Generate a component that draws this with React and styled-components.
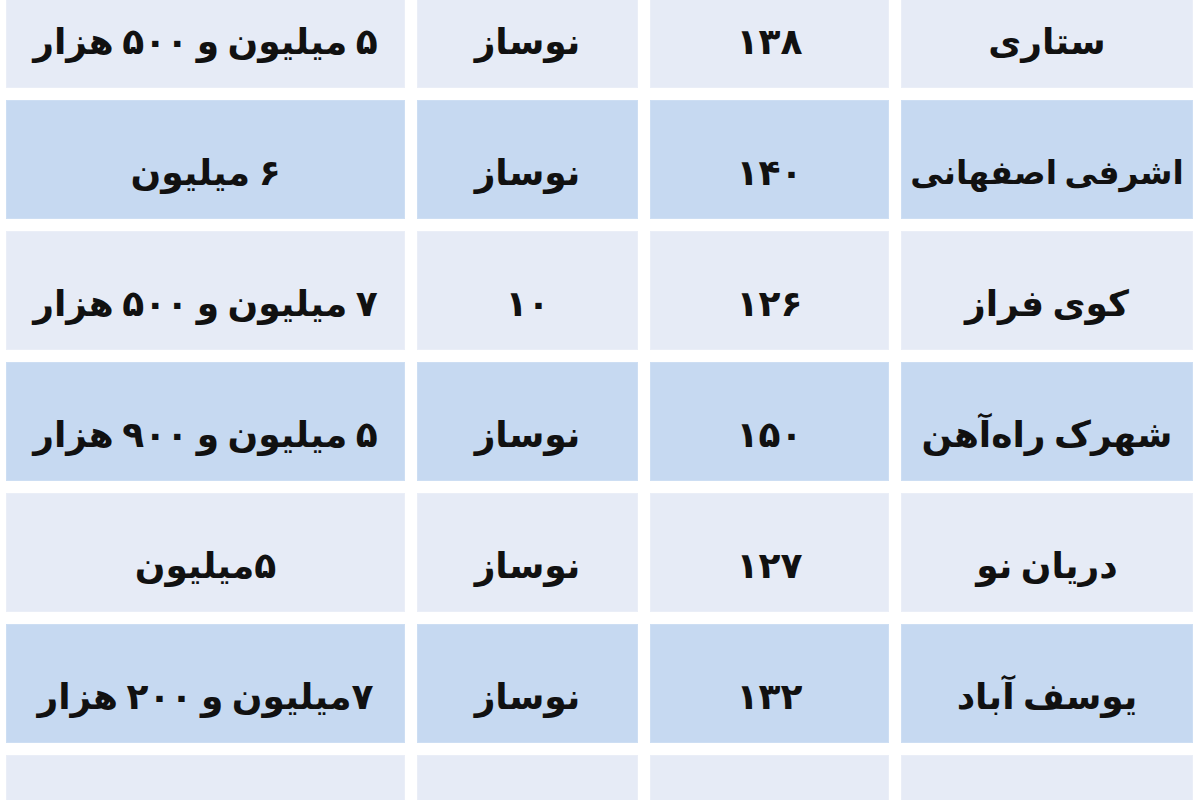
import React from "react";
import styled, { createGlobalStyle } from "styled-components";

const GlobalStyle = createGlobalStyle`
  html, body {
    margin: 0;
    padding: 0;
    background: #ffffff;
    overflow: hidden;
  }
  body {
    font-family: "DejaVu Sans", "Noto Sans", sans-serif;
  }
`;

const Page = styled.div`
  width: 1200px;
  height: 800px;
  overflow: hidden;
  background: #ffffff;
`;

const Table = styled.div`
  direction: rtl;
  display: grid;
  grid-template-columns: 292px 239px 221px 399px;
  grid-auto-rows: 119px;
  column-gap: 12px;
  row-gap: 12px;
  padding: 0 7px 0 6px;
  margin-top: -31px;
`;

const Cell = styled.div`
  display: flex;
  align-items: center;
  justify-content: center;
  padding-top: 26px;
  box-sizing: border-box;
  background: ${(p) => (p.$blue ? "#c6d9f1" : "#e6ebf6")};
  box-shadow: inset 0 0 0 1px ${(p) => (p.$blue ? "#cddef3" : "#eaeef7")};
  color: #111111;
  font-family: "DejaVu Sans", sans-serif;
  font-weight: bold;
  font-size: ${(p) => (p.$long ? "33px" : "36px")};
  white-space: nowrap;
  letter-spacing: ${(p) => (p.$long ? "-1.2px" : "-0.8px")};
  word-spacing: -4px;
`;

const rows = [
  ["ستاری", "۱۳۸", "نوساز", "۵ میلیون و ۵۰۰ هزار"],
  ["اشرفی اصفهانی", "۱۴۰", "نوساز", "۶ میلیون"],
  ["کوی فراز", "۱۲۶", "۱۰", "۷ میلیون و ۵۰۰ هزار"],
  ["شهرک راه‌آهن", "۱۵۰", "نوساز", "۵ میلیون و ۹۰۰ هزار"],
  ["دریان نو", "۱۲۷", "نوساز", "۵میلیون"],
  ["یوسف آباد", "۱۳۲", "نوساز", "۷میلیون و ۲۰۰ هزار"],
  ["", "", "", ""],
];

export default function App() {
  return (
    <Page>
      <GlobalStyle />
      <Table>
        {rows.map((row, i) =>
          row.map((text, j) => (
            <Cell
              key={`${i}-${j}`}
              $blue={i % 2 === 1}
              $long={j === 0 && text.length > 12}
            >
              {text}
            </Cell>
          ))
        )}
      </Table>
    </Page>
  );
}
